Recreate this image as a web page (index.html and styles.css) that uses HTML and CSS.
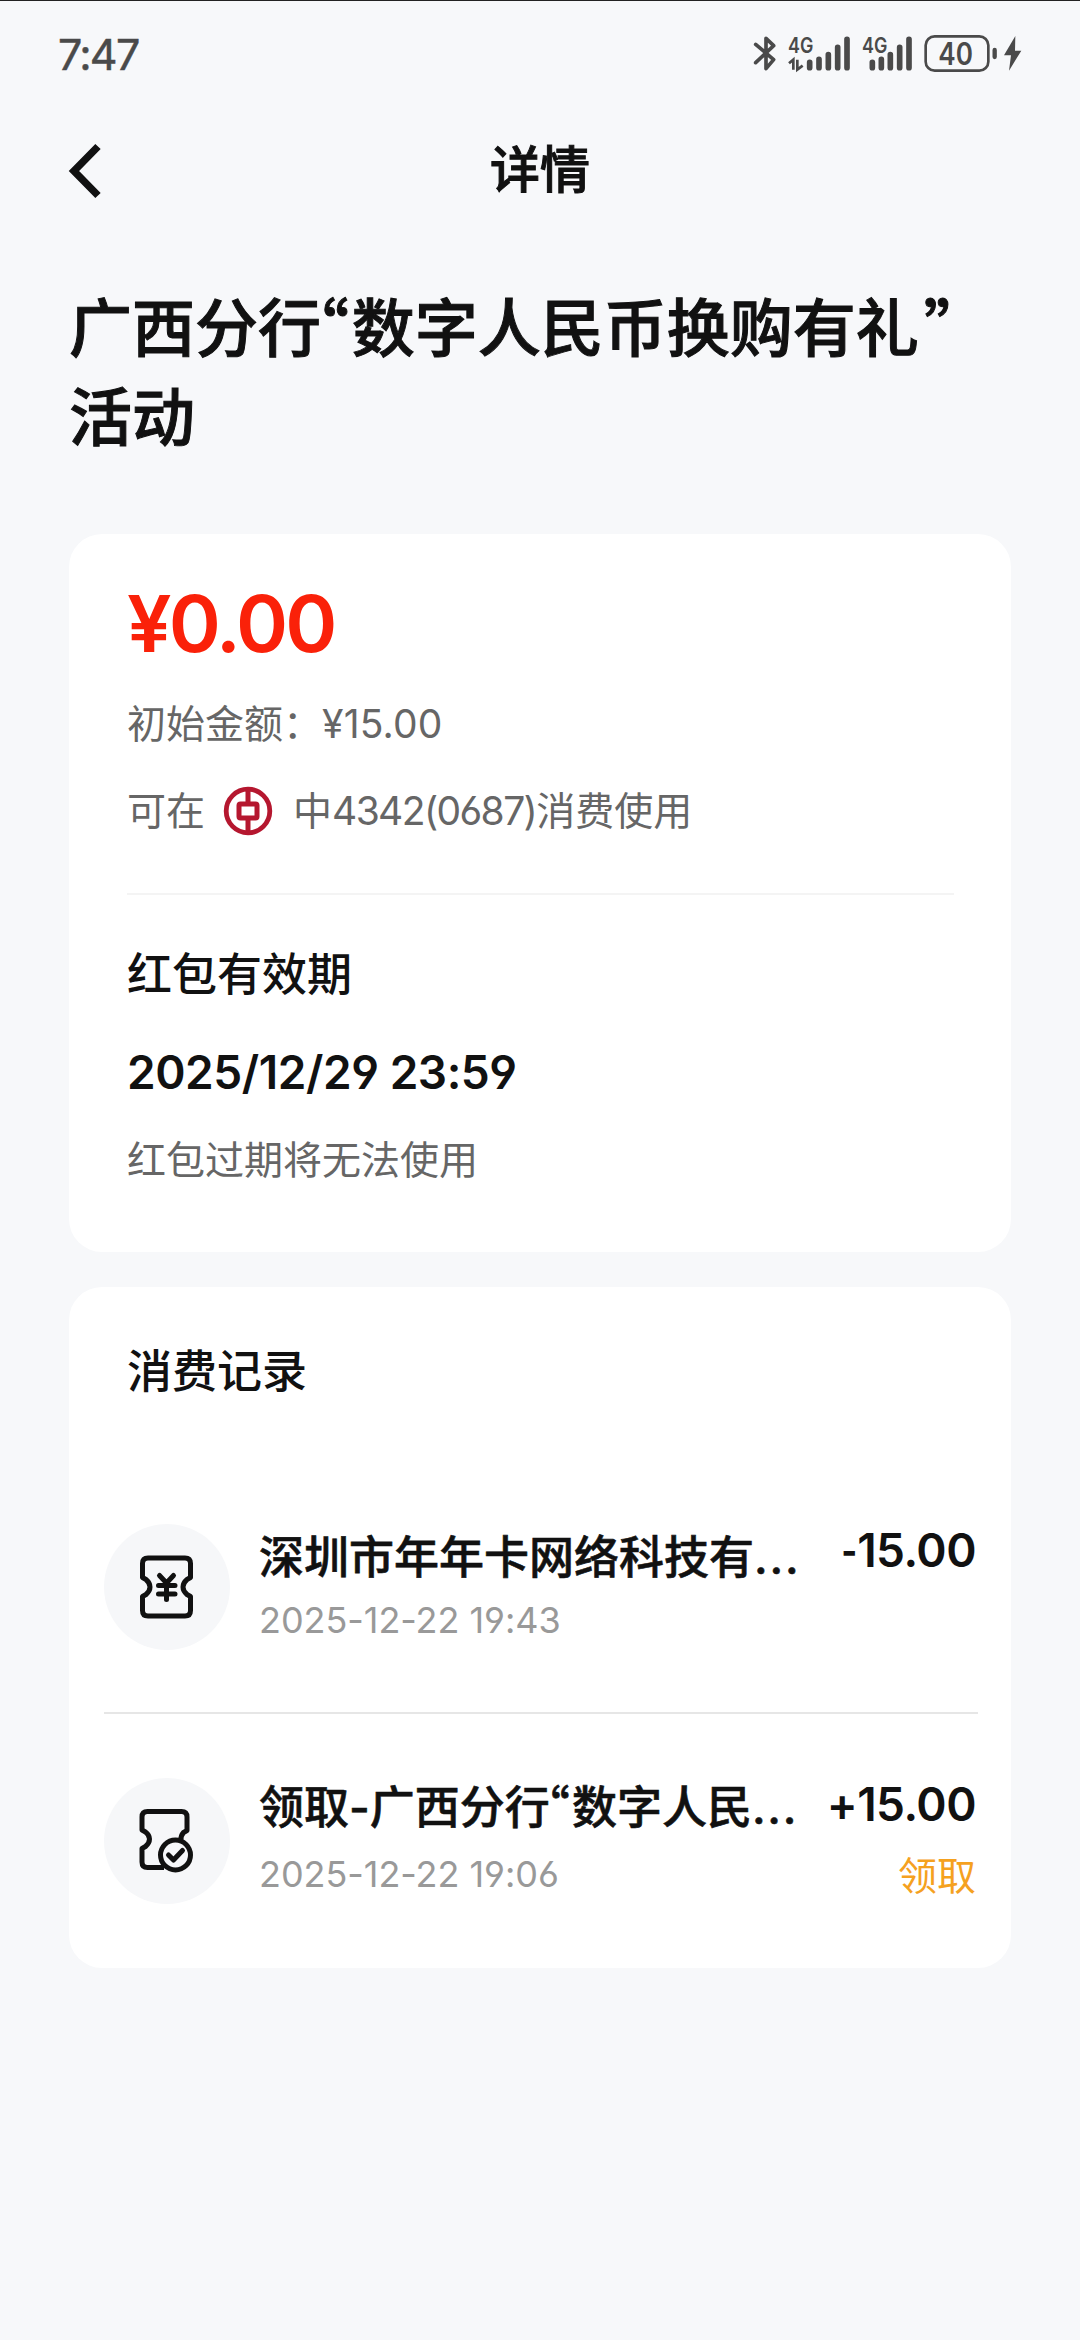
FILE: index.html
```html
<!DOCTYPE html>
<html lang="zh-CN">
<head>
<meta charset="utf-8">
<title>详情</title>
<link rel="stylesheet" href="styles.css">
</head>
<body>
<div class="status-bar">
  <span class="clock">7:47</span>
  <svg class="status-icons" viewBox="0 0 900 210" width="300" height="70">
    <g fill="none" stroke="#4a4a4a" stroke-width="11" stroke-linecap="round" stroke-linejoin="round">
      <path d="M47 73L101 119L78 146V55L101 77L47 128"/>
      <rect x="557" y="49" width="188" height="103" rx="27" stroke-width="8"/>
    </g>
    <g stroke="#4a4a4a" stroke-width="17" stroke-linecap="round">
      <path d="M209 127V143M237 118V143M265 104V143M293 82V143M321 58V143"/>
      <path d="M397 127V143M424 118V143M451 104V143M479 82V143M507 58V143"/>
      <path d="M764 90V111" stroke-width="13"/>
    </g>
    <path d="M147 130L160 119V149M172 119V149L188 137" fill="none" stroke="#4a4a4a" stroke-width="8"/>
    <path d="M826 48L792 106H813L807 152L844 92H825Z" fill="#4a4a4a"/>
    <text class="net" x="144" y="99" textLength="76" lengthAdjust="spacingAndGlyphs">4G</text>
    <text class="net" x="366" y="99" textLength="76" lengthAdjust="spacingAndGlyphs">4G</text>
    <text class="level" x="595" y="134" textLength="104" lengthAdjust="spacingAndGlyphs">40</text>
  </svg>
</div>

<header class="nav">
  <svg class="back" viewBox="0 0 40 60" width="40" height="60"><path d="M31 5.500L7 30L31 54.500" fill="none" stroke="#111" stroke-width="7.500"/></svg>
  <h1 class="nav-title">详情</h1>
</header>

<main class="page">
  <h2 class="title">广西分行<span class="quote">“</span>数字人民币换购有礼<span class="quote close">”</span><br>活动</h2>

  <section class="card summary">
    <div class="balance">¥0.00</div>
    <div class="line">初始金额：<span class="initial">¥15.00</span></div>
    <div class="line account">
      <span>可在</span>
      <svg class="bank" viewBox="0 0 50 50" width="50" height="50">
        <g fill="none" stroke="#b5172f">
          <circle cx="25" cy="25" r="21.800" stroke-width="4.800"/>
          <rect x="16" y="18" width="18" height="14" rx="1.500" stroke-width="5"/>
          <path d="M25 3V18M25 32V47" stroke-width="5"/>
        </g>
      </svg>
      <span>中<span class="number">4342(0687)</span>消费使用</span>
    </div>
    <div class="validity">
      <h3 class="heading">红包有效期</h3>
      <div class="expiry">2025/12/29 23:59</div>
      <div class="hint">红包过期将无法使用</div>
    </div>
  </section>

  <section class="card records">
    <h3 class="heading">消费记录</h3>
    <article class="record spent">
      <div class="badge">
        <svg viewBox="0 0 60 70" width="60" height="70" fill="none" stroke="#111" stroke-width="5" stroke-linejoin="round">
          <path d="M5.500 25V11.500Q5.500 6 11 6H48Q53.500 6 53.500 11.500V25.500L50 27.500Q46 31 46 35Q46 39 50 42.500L53.500 44.500V58.500Q53.500 64 48 64H11Q5.500 64 5.500 58.500V44.500L9 42.500Q13 39 13 35Q13 31 9 27.500L5.500 25.500Z"/>
          <path d="M22.500 23.500L29.500 31L36.500 23.500M29.500 31V47.500M21.500 33.500H38M21.500 42H38" stroke-linecap="round"/>
        </svg>
      </div>
      <div class="info">
        <div class="name">深圳市年年卡网络科技有<span class="dots">...</span></div>
        <div class="time">2025-12-22 19:43</div>
      </div>
      <div class="side"><div class="amount"><span class="minus">-</span>15.00</div></div>
    </article>
    <article class="record">
      <div class="badge">
        <svg viewBox="0 0 60 70" width="60" height="70" fill="none" stroke="#111" stroke-width="5" stroke-linejoin="round">
          <path d="M27 61.500H10.500Q5 61.500 5 56V42.500L8.500 40.500Q12.500 37 12.500 33Q12.500 29 8.500 26L5 24V11Q5 5.500 10.500 5.500H44.500Q50 5.500 50 11V24.500L46.500 26.500Q43.500 30 44 34"/>
          <circle cx="38.500" cy="49" r="15"/>
          <path d="M31.500 49L36.500 54L45.500 44.500" stroke-linecap="round"/>
        </svg>
      </div>
      <div class="info">
        <div class="name">领取<span class="dash">-</span>广西分行<span class="quote">“</span>数字人民<span class="dots">...</span></div>
        <div class="time">2025-12-22 19:06</div>
      </div>
      <div class="side"><div class="amount">+15.00</div><div class="tag">领取</div></div>
    </article>
  </section>
</main>
</body>
</html>
```
FILE: styles.css
```css
* { box-sizing: border-box; margin: 0; }

body {
  width: 1080px;
  min-height: 2340px;
  background: #f7f8fa;
  border-top: 1px solid #222;
  color: #111;
  font-family: Inter, "Noto Sans CJK SC", sans-serif;
  font-feature-settings: "cv03", "cv04";
  line-height: 1;
  white-space: nowrap;
}

svg { display: block; flex: none; }

.status-bar {
  display: flex;
  justify-content: space-between;
  height: 109px;
  padding: 19px 40px 0 58px;
}
.clock { font-size: 43px; line-height: 69px; color: #4a4a4a; letter-spacing: -1.7px; -webkit-text-stroke: 0.5px; }
.net { font-size: 66px; font-weight: 600; fill: #4a4a4a; }
.level { font-size: 92px; font-weight: 600; fill: #4a4a4a; }

.nav {
  display: grid;
  grid-template-columns: 1fr auto 1fr;
  align-items: center;
  height: 121px;
  padding: 0 67px;
}
.nav-title { padding-bottom: 2px; font-size: 50px; font-weight: 500; line-height: 60px; -webkit-text-stroke: 1px; }

.page { padding: 53px 69px 0; }
.title { font-size: 63px; font-weight: 500; line-height: 89px; -webkit-text-stroke: 1px; }
.quote {
  display: inline-block;
  width: 0.49em;
  font-family: "Noto Sans CJK SC", sans-serif;
  font-feature-settings: "palt";
  line-height: 1;
  text-indent: -0.07em;
}
.quote.close { text-indent: 0.09em; }

.card { border-radius: 33px; background: #fff; }

.summary { height: 718px; margin-top: 72px; padding: 45px 57px 0 58px; }
.balance { font-size: 79px; font-weight: 600; line-height: 88px; color: #fa2109; letter-spacing: -2.8px; }
.line { margin-top: 27px; font-size: 39px; line-height: 60px; color: #666; }
.initial { letter-spacing: 0.2px; }
.number { letter-spacing: -1.6px; }
.account { display: flex; align-items: center; }
.bank { margin: 0 20px 0 18px; }

.validity { margin-top: 52px; padding-top: 50px; border-top: 2px solid #f4f4f4; }
.heading { font-size: 45px; font-weight: 500; line-height: 60px; }
.expiry { margin-top: 37px; font-size: 46px; font-weight: 600; line-height: 60px; letter-spacing: -0.45px; }
.hint { margin-top: 28px; font-size: 39px; line-height: 60px; color: #666; }

.records { height: 681px; margin-top: 35px; padding: 55px 33px 0 35px; }
.records .heading { padding-left: 23px; }

.record { display: flex; height: 253px; padding-top: 64px; }
.record.spent { height: 312px; padding-top: 122px; border-bottom: 2px solid #e6e6e6; }
.badge {
  display: grid;
  place-items: center;
  flex: none;
  width: 126px;
  height: 126px;
  border-radius: 50%;
  background: #f6f7f9;
}
.info { flex: 1; margin-left: 29px; }
.name { height: 60px; font-size: 45px; font-weight: 500; line-height: 60px; -webkit-text-stroke: 0.6px; }
.time { margin-top: 8px; font-size: 36px; line-height: 56px; color: #999; letter-spacing: -0.05px; }
.spent .name { padding-top: 4px; }
.dots { letter-spacing: 1.8px; }
.side { padding-right: 2px; text-align: right; }
.amount { margin-top: -2px; font-size: 46px; font-weight: 600; line-height: 56px; letter-spacing: -0.5px; }
.minus { display: inline-block; transform: scaleX(0.75); transform-origin: right; }
.tag { margin-top: 14px; font-size: 39px; line-height: 60px; color: #f5a11f; }
```
